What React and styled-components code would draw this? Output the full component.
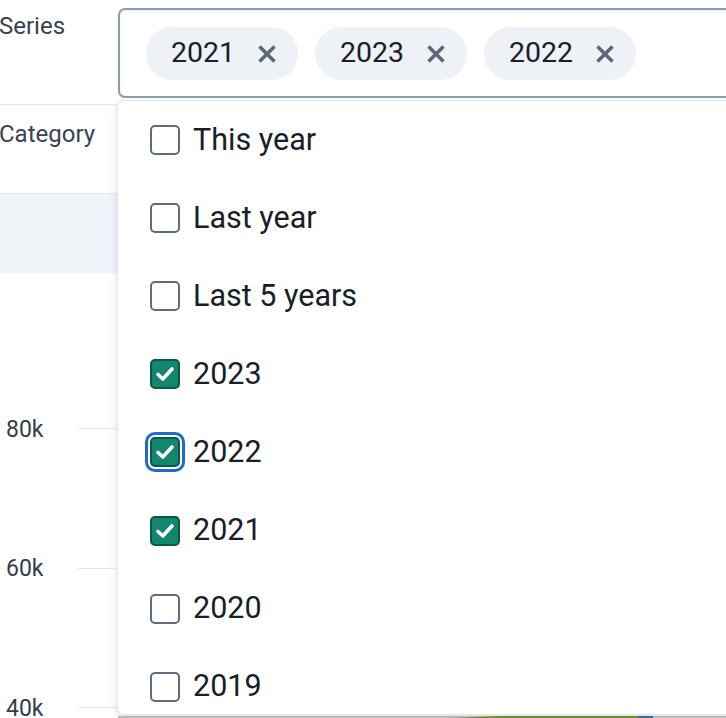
import React from "react";
import styled, { createGlobalStyle, css } from "styled-components";

const GlobalStyle = createGlobalStyle`
  html, body { margin: 0; padding: 0; background: #ffffff; }
  body { font-family: Roboto, "Noto Sans", "Liberation Sans", sans-serif; overflow: hidden; }
  * { box-sizing: border-box; }
`;

const Viewport = styled.div`
  width: 726px;
  height: 718px;
  overflow: hidden;
  position: relative;
`;

const Page = styled.div`
  width: 820px;
  display: flex;
  flex-direction: column;
`;

const FieldRow = styled.div`
  display: grid;
  grid-template-columns: 118px 1fr;
  height: 104px;
`;

const FieldLabel = styled.div`
  font-size: 24px;
  line-height: 1;
  color: #3a4250;
  padding-top: ${(p) => p.$top}px;
  margin-left: -1px;
`;

const SelectWrap = styled.div`
  position: relative;
  padding-top: 8px;
  z-index: 5;
`;

const SelectBox = styled.div`
  height: 90px;
  border: 2px solid #8b9bb0;
  border-radius: 7px;
  box-shadow: inset 0 2px 3px rgba(0, 0, 0, 0.06);
  background: #ffffff;
  display: flex;
  align-items: flex-start;
  gap: 17px;
  padding: 17px 0 0 26px;
`;

const Chip = styled.div`
  display: inline-flex;
  align-items: center;
  height: 53px;
  width: 152px;
  padding: 0 0 0 25px;
  gap: 22px;
  border-radius: 27px;
  background: #eef1f5;
  font-size: 28.5px;
  color: #1a1e28;
`;

const ChipText = styled.span`
  width: 64px;
  line-height: 1;
`;

const Dropdown = styled.div`
  position: absolute;
  left: -1px;
  top: 100px;
  width: 100%;
  height: 615px;
  background: #ffffff;
  border: 1px solid #e2e5e9;
  border-radius: 6px;
  box-shadow: 0 4px 8px rgba(17, 24, 39, 0.12);
  overflow: hidden;
`;

const Option = styled.div`
  height: 78.1px;
  display: flex;
  align-items: center;
  gap: 13px;
  padding-left: 32px;
  font-size: 30.5px;
  color: #191e28;
`;

const Box = styled.span`
  width: 30px;
  height: 30px;
  flex: none;
  border-radius: 5px;
  border: 2px solid #5f6c7e;
  background: #ffffff;
  display: flex;
  align-items: center;
  justify-content: center;
  ${(p) =>
    p.$checked &&
    css`
      background: #138670;
      border-color: #0e5646;
    `}
  ${(p) =>
    p.$focus &&
    css`
      outline: 3.5px solid #1b6bd0;
      outline-offset: 2.5px;
    `}
`;

const OptionText = styled.span`
  line-height: 1;
`;

const CategoryRow = styled.div`
  height: 89px;
  border-top: 1px solid #e5e8ec;
`;

const Band = styled.div`
  height: 80px;
  border-top: 1px solid #e5e8ec;
  background: #f0f3f7;
`;

const Chart = styled.div`
  position: relative;
  padding-top: 86px;
  display: flex;
  flex-direction: column;
`;

const GridRow = styled.div`
  display: grid;
  grid-template-columns: 78px 1fr;
  align-items: center;
  height: 139.4px;
`;

const AxisLabel = styled.span`
  font-size: 23px;
  line-height: 0.9;
  color: #333d4b;
  padding-left: 6px;
  margin-top: 3px;
`;

const GridLine = styled.div`
  height: 1px;
  background: #e6e8eb;
`;

const PlotPeek = styled.svg`
  position: absolute;
  left: 0;
  top: 0;
  pointer-events: none;
`;

const XIcon = () => (
  <svg width="20" height="20" viewBox="0 0 20 20" aria-hidden="true">
    <path d="M2.5 2.5 L17.5 17.5 M17.5 2.5 L2.5 17.5" stroke="#5b6676" strokeWidth="3.5" fill="none" />
  </svg>
);

const Check = () => (
  <svg width="26" height="26" viewBox="0 0 26 26" aria-hidden="true">
    <path d="M6 13.5 L10.8 18 L20 8" stroke="#ffffff" strokeWidth="3.6" fill="none" strokeLinecap="round" strokeLinejoin="round" />
  </svg>
);

const chips = ["2021", "2023", "2022"];
const options = [
  { label: "This year" },
  { label: "Last year" },
  { label: "Last 5 years" },
  { label: "2023", checked: true },
  { label: "2022", checked: true, focus: true },
  { label: "2021", checked: true },
  { label: "2020" },
  { label: "2019" },
];
const ticks = ["80k", "60k", "40k"];

export default function App() {
  return (
    <Viewport>
      <GlobalStyle />
      <Page>
        <FieldRow>
          <FieldLabel $top={14}>Series</FieldLabel>
          <SelectWrap>
            <SelectBox>
              {chips.map((c) => (
                <Chip key={c}>
                  <ChipText>{c}</ChipText>
                  <XIcon />
                </Chip>
              ))}
            </SelectBox>
            <Dropdown>
              {options.map((o) => (
                <Option key={o.label}>
                  <Box $checked={o.checked} $focus={o.focus}>
                    {o.checked && <Check />}
                  </Box>
                  <OptionText>{o.label}</OptionText>
                </Option>
              ))}
            </Dropdown>
          </SelectWrap>
        </FieldRow>
        <CategoryRow>
          <FieldLabel $top={17}>Category</FieldLabel>
        </CategoryRow>
        <Band />
        <Chart>
          {ticks.map((t) => (
            <GridRow key={t}>
              <AxisLabel>{t}</AxisLabel>
              <GridLine />
            </GridRow>
          ))}
          <PlotPeek width="820" height="460" viewBox="0 0 820 460">
            <rect x="118" y="443" width="700" height="3" fill="#c4c7cc" />
            <polygon points="430,446 500,443 653,443 653,446" fill="#7a9430" />
            <rect x="638" y="443" width="15" height="3" fill="#4a6fa0" />
          </PlotPeek>
        </Chart>
      </Page>
    </Viewport>
  );
}
